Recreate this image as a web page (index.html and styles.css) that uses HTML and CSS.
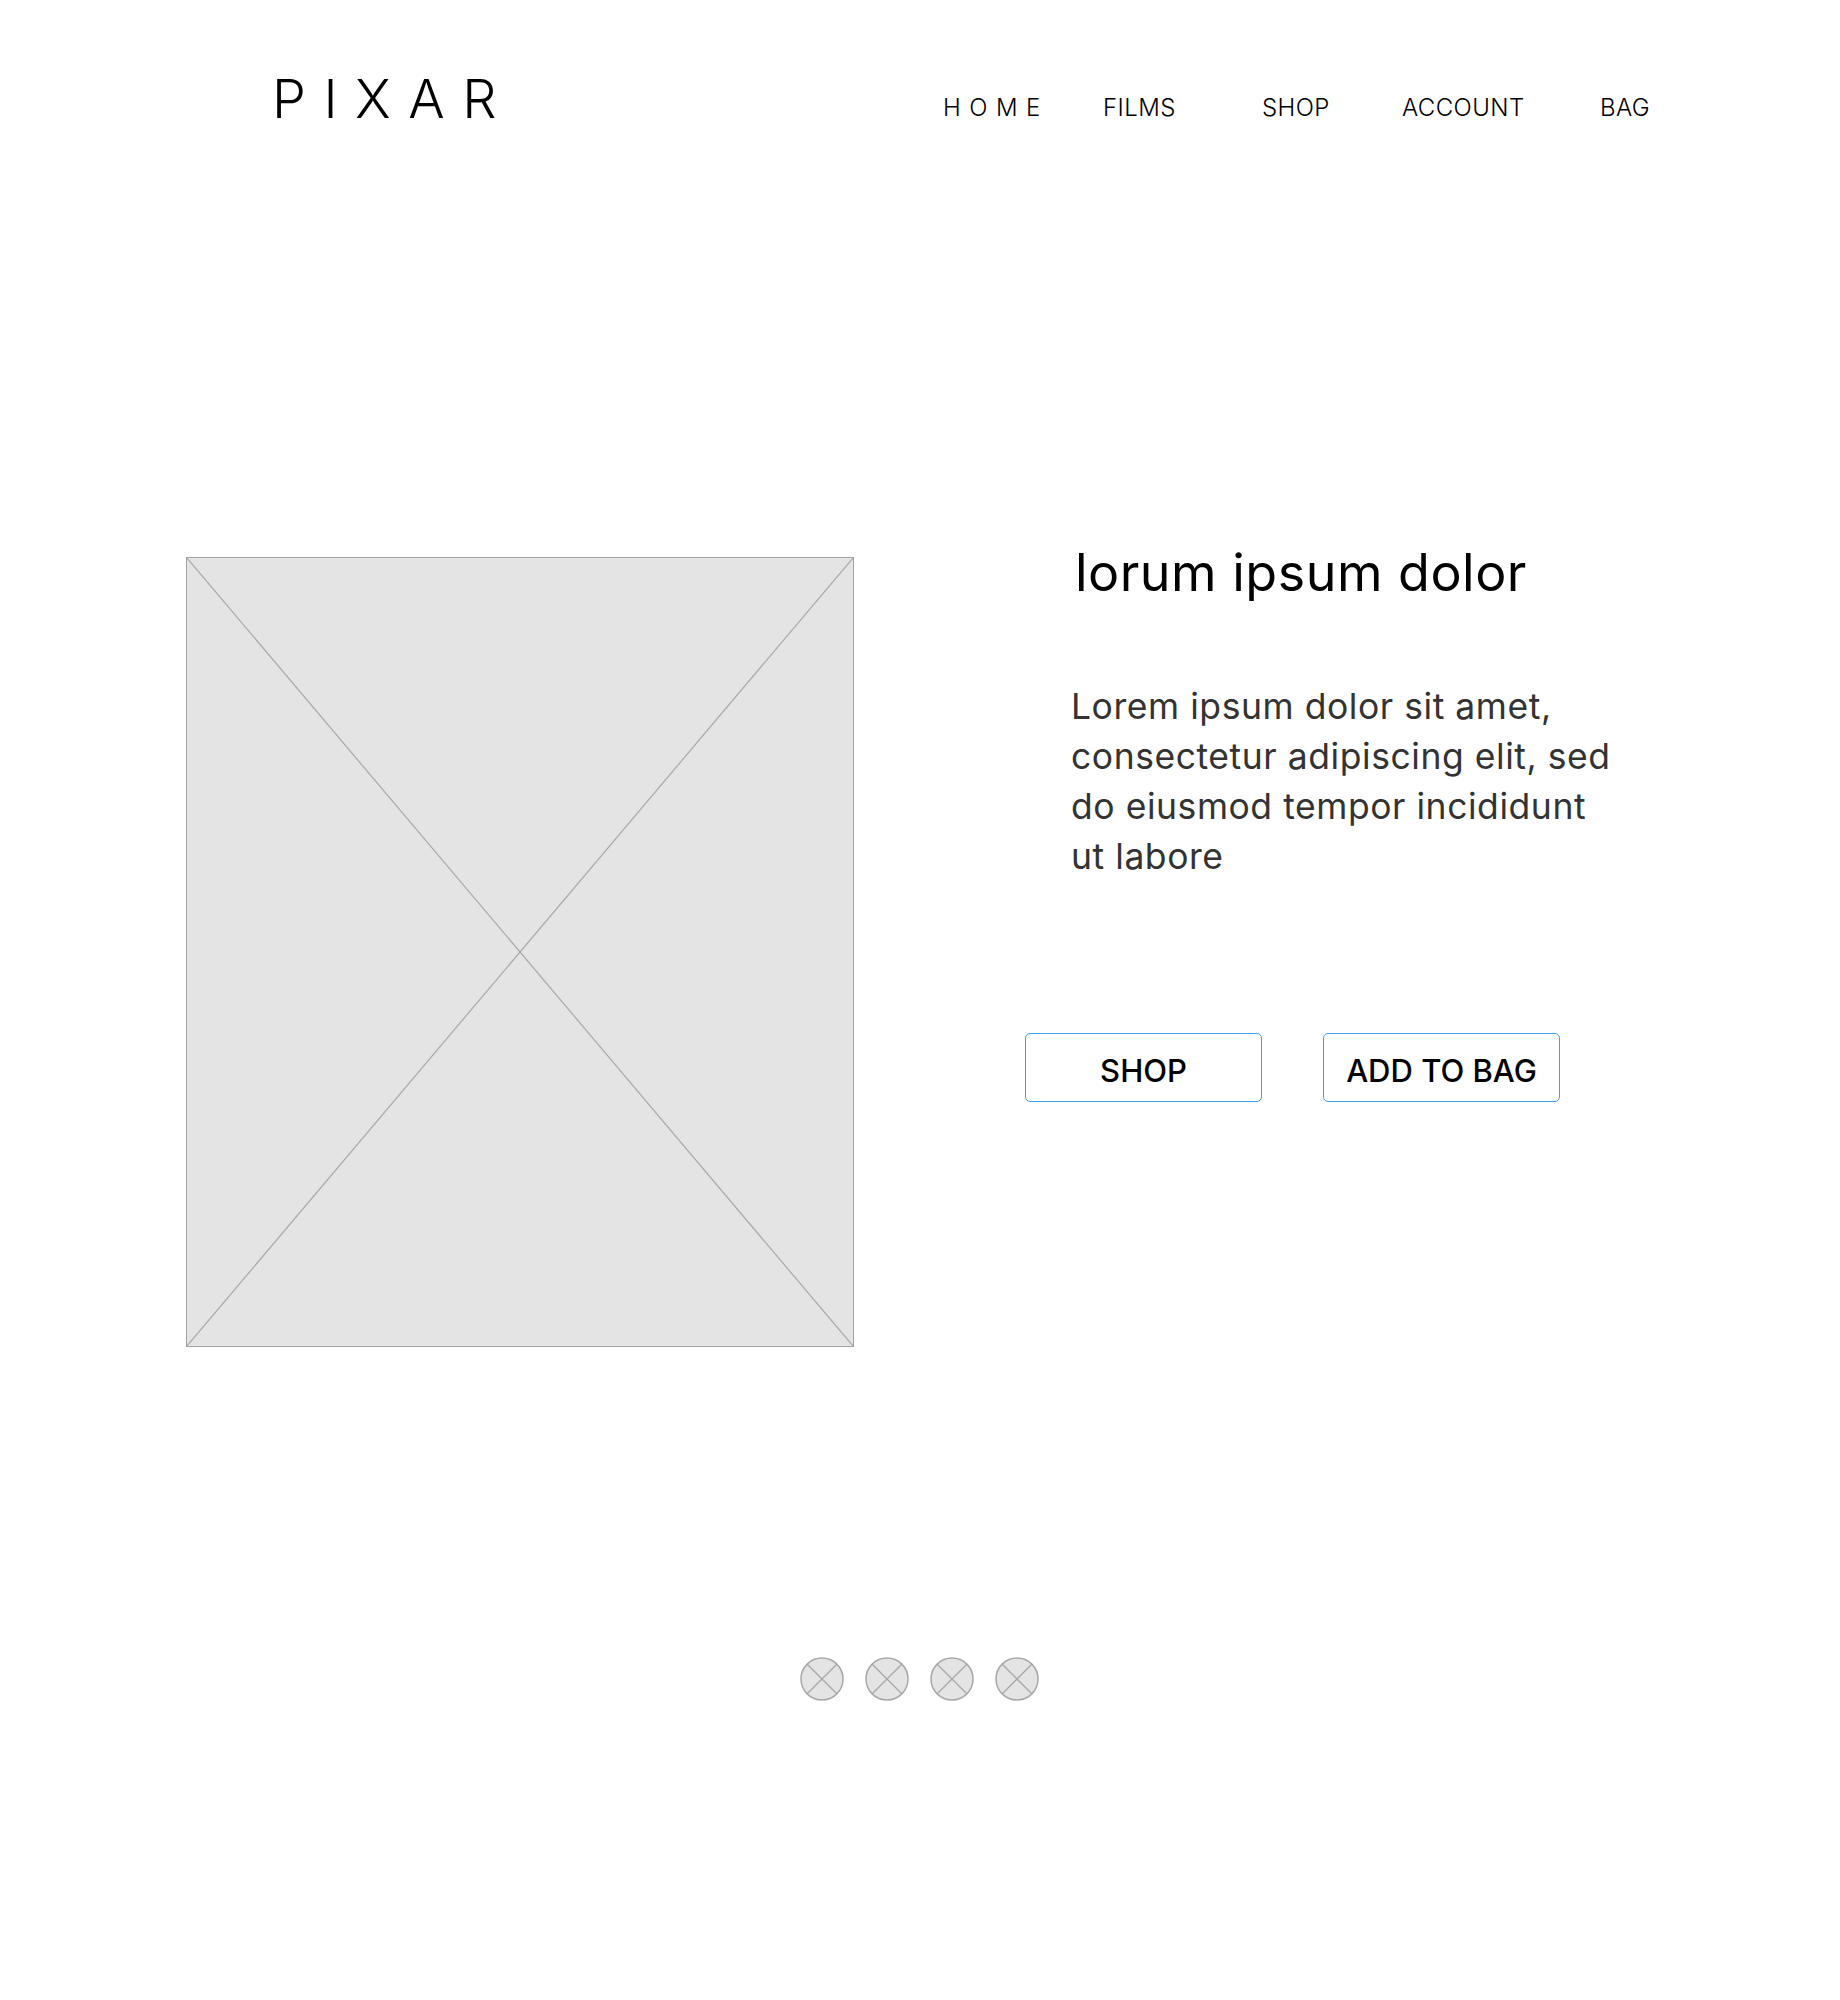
FILE: index.html
```html
<!DOCTYPE html>
<html lang="en">
<head>
<meta charset="utf-8">
<title>Pixar</title>
<link rel="stylesheet" href="styles.css">
</head>
<body>
<header class="header">
  <div class="logo">PIXAR</div>
  <nav class="nav">
    <a class="nav-link nav-home" href="#">HOME</a>
    <a class="nav-link nav-films" href="#">FILMS</a>
    <a class="nav-link nav-shop" href="#">SHOP</a>
    <a class="nav-link nav-account" href="#">ACCOUNT</a>
    <a class="nav-link nav-bag" href="#">BAG</a>
  </nav>
</header>
<main class="hero">
  <div class="placeholder">
    <svg class="placeholder-x" viewBox="0 0 100 100" preserveAspectRatio="none">
      <line x1="0" y1="0" x2="100" y2="100" vector-effect="non-scaling-stroke"/>
      <line x1="100" y1="0" x2="0" y2="100" vector-effect="non-scaling-stroke"/>
    </svg>
  </div>
  <section class="info">
    <h1 class="title">lorum ipsum dolor</h1>
    <p class="desc">Lorem ipsum dolor sit amet, consectetur adipiscing elit, sed do eiusmod tempor incididunt ut labore</p>
    <div class="actions">
      <button class="btn">SHOP</button>
      <button class="btn">ADD TO BAG</button>
    </div>
  </section>
</main>
<div class="dots">
  <span class="dot"><svg viewBox="0 0 44 44"><circle cx="22" cy="22" r="21"/><line x1="7.2" y1="7.2" x2="36.8" y2="36.8"/><line x1="36.8" y1="7.2" x2="7.2" y2="36.8"/></svg></span>
  <span class="dot"><svg viewBox="0 0 44 44"><circle cx="22" cy="22" r="21"/><line x1="7.2" y1="7.2" x2="36.8" y2="36.8"/><line x1="36.8" y1="7.2" x2="7.2" y2="36.8"/></svg></span>
  <span class="dot"><svg viewBox="0 0 44 44"><circle cx="22" cy="22" r="21"/><line x1="7.2" y1="7.2" x2="36.8" y2="36.8"/><line x1="36.8" y1="7.2" x2="7.2" y2="36.8"/></svg></span>
  <span class="dot"><svg viewBox="0 0 44 44"><circle cx="22" cy="22" r="21"/><line x1="7.2" y1="7.2" x2="36.8" y2="36.8"/><line x1="36.8" y1="7.2" x2="7.2" y2="36.8"/></svg></span>
</div>
</body>
</html>
```
FILE: styles.css
```css
* { box-sizing: border-box; }
html, body { margin: 0; padding: 0; background: #ffffff; }
body {
  font-family: "Inter", "Open Sans", sans-serif;
  color: #000;
  width: 1840px;
  min-height: 2000px;
}

.header {
  display: flex;
  align-items: flex-start;
  padding: 66px 0 0 272px;
  height: 160px;
}
.logo {
  font-size: 54px;
  font-weight: 300;
  letter-spacing: 17.5px;
  line-height: 66px;
  width: 671px;
}
.nav {
  display: flex;
  padding-top: 28px;
}
.nav-link {
  font-size: 24px;
  font-weight: 300;
  color: #000;
  text-decoration: none;
  line-height: 28px;
  letter-spacing: 0.4px;
}
.nav-home { width: 160px; letter-spacing: 8.5px; }
.nav-films { width: 159px; }
.nav-shop { width: 140px; }
.nav-account { width: 198px; }

.hero {
  display: flex;
  align-items: flex-start;
  padding: 397px 0 0 186px;
}
.placeholder {
  width: 668px;
  height: 790px;
  background: #e4e4e4;
  border: 1px solid #a3a3a3;
}
.placeholder-x {
  display: block;
  width: 100%;
  height: 100%;
}
.placeholder-x line {
  stroke: #a8a8a8;
  stroke-width: 1.2;
}

.info {
  margin-left: 171px;
  width: 620px;
}
.title {
  margin: -16px 0 0 50px;
  font-size: 52px;
  font-weight: 400;
  line-height: 64px;
  letter-spacing: 0.5px;
  color: #000;
}
.desc {
  margin: 77px 0 0 46px;
  width: 548px;
  font-size: 35.5px;
  font-weight: 400;
  line-height: 50px;
  letter-spacing: 0.55px;
  color: #333;
}
.actions {
  display: flex;
  gap: 61px;
  margin-top: 151px;
}
.btn {
  width: 237px;
  height: 69px;
  border: 1.5px solid #3d9ff0;
  border-radius: 5px;
  background: #fff;
  font-family: "Inter", "Open Sans", sans-serif;
  font-size: 31px;
  font-weight: 500;
  color: #000;
  padding: 6px 0 0;
}

.dots {
  display: flex;
  justify-content: center;
  gap: 21px;
  margin-top: 310px;
  padding-right: 1px;
}
.dot {
  display: block;
  width: 44px;
  height: 44px;
}
.dot svg {
  display: block;
  width: 44px;
  height: 44px;
}
.dot circle {
  fill: #e4e4e4;
  stroke: #a8a8a8;
  stroke-width: 1.5;
}
.dot line {
  stroke: #a8a8a8;
  stroke-width: 1.3;
}
```
